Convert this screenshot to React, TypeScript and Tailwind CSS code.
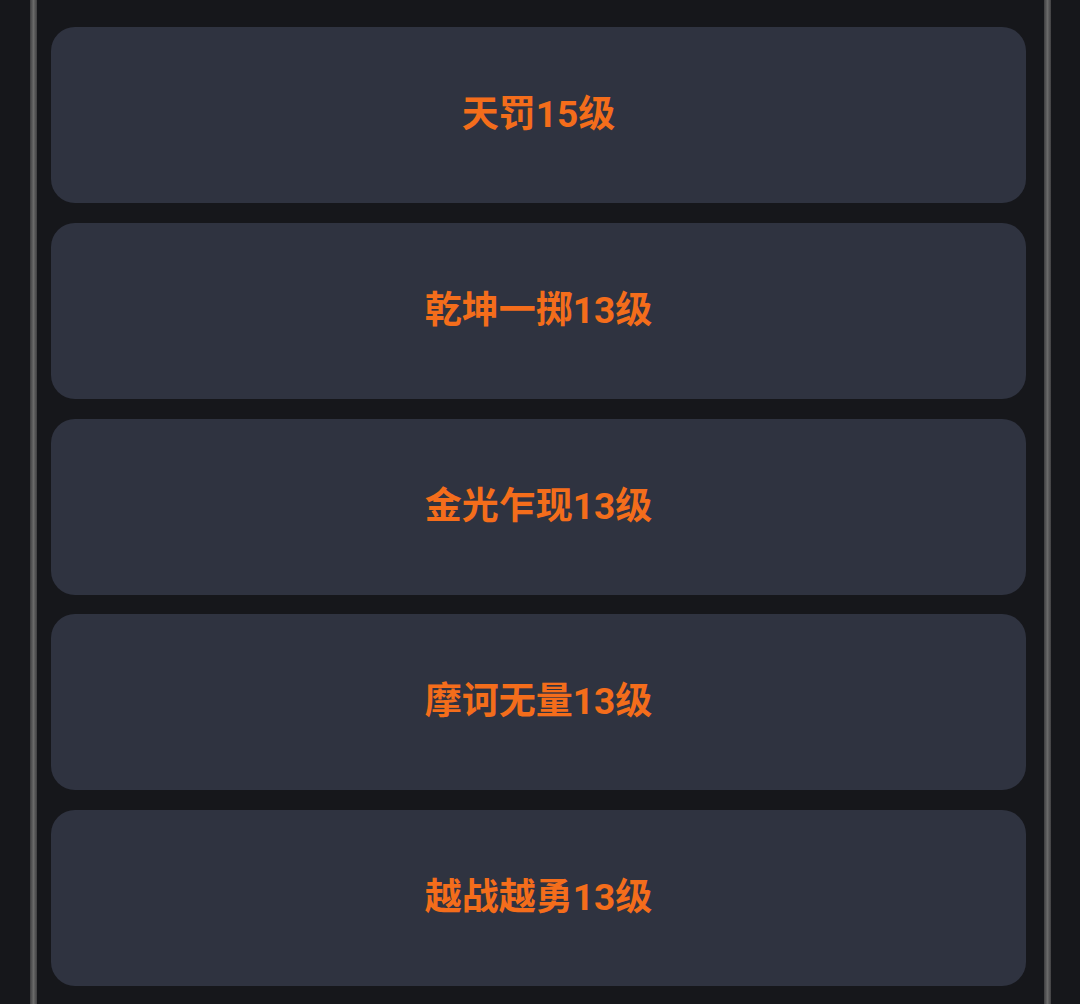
import React from 'react';

const SKILLS = ['天罚15级', '乾坤一掷13级', '金光乍现13级', '摩诃无量13级', '越战越勇13级'];

const App = () => {
  return (
    <div className="h-[1004px] w-[1080px] overflow-hidden bg-[#16171b] pl-[30px] pr-[29px]">
      <div className="flex h-full">
        <div className="w-[7px] bg-gradient-to-r from-[#3e3e40] via-[#6a6a6a] to-[#404042]" />
        <div className="flex flex-1 flex-col gap-[19.75px] pl-[14px] pr-[18px] pt-[27px]">
          {SKILLS.map((name) => (
            <div
              key={name}
              className="flex h-[176px] shrink-0 items-center justify-center rounded-[24px] bg-[#2f3340]"
            >
              <span
                className="-mt-[1px] text-[37px] font-bold leading-none text-[#f46d1b]"
                style={{ fontFamily: 'Roboto, "Noto Sans CJK SC", sans-serif' }}
              >
                {name}
              </span>
            </div>
          ))}
        </div>
        <div className="w-[7px] bg-gradient-to-r from-[#3e3e40] via-[#6a6a6a] to-[#404042]" />
      </div>
    </div>
  );
};

export default App;
